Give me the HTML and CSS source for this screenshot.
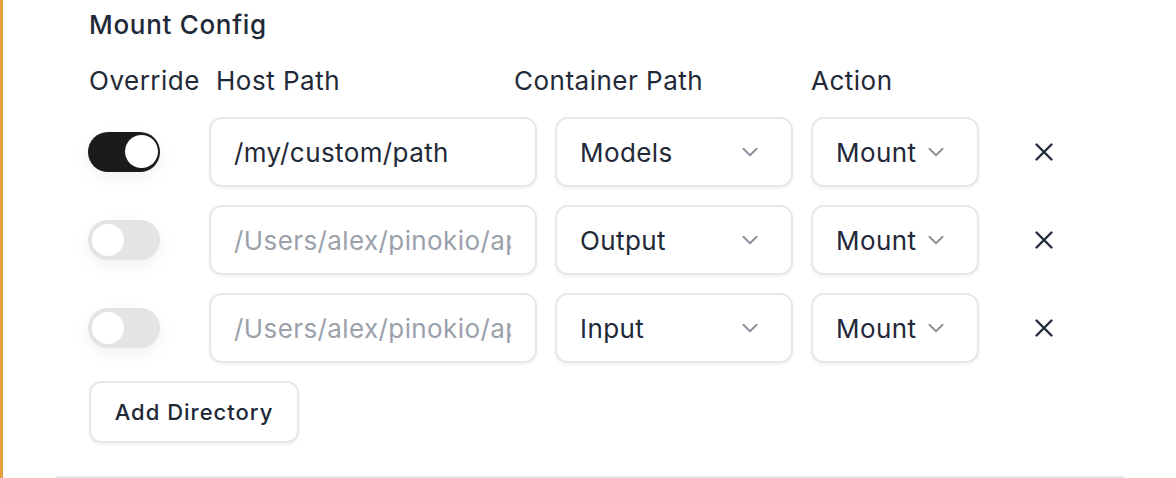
FILE: index.html
```html
<!DOCTYPE html>
<html>
<head>
<meta charset="utf-8">
<link rel="stylesheet" href="styles.css">
</head>
<body>
<div class="panel">
  <div class="content">
    <h2 class="title">Mount Config</h2>
    <div class="head">
      <span class="h-override">Override</span>
      <span class="h-host">Host Path</span>
      <span class="h-cont">Container Path</span>
      <span class="h-action">Action</span>
    </div>
    <div class="rows">
      <div class="row">
        <div class="toggle on"><span class="knob"></span></div>
        <div class="field"><span class="val">/my/custom/path</span></div>
        <div class="field select"><span class="val">Models</span><svg class="chev" viewBox="0 0 20 20"><path d="M4 7l6 6 6-6"/></svg></div>
        <div class="field select action"><span class="val">Mount</span><svg class="chev" viewBox="0 0 20 20"><path d="M4 7l6 6 6-6"/></svg></div>
        <button class="remove"><svg viewBox="0 0 24 24"><path d="M3 3l18 18M21 3L3 21"/></svg></button>
      </div>
      <div class="row">
        <div class="toggle"><span class="knob"></span></div>
        <div class="field"><span class="val ph">/Users/alex/pinokio/ap</span></div>
        <div class="field select"><span class="val">Output</span><svg class="chev" viewBox="0 0 20 20"><path d="M4 7l6 6 6-6"/></svg></div>
        <div class="field select action"><span class="val">Mount</span><svg class="chev" viewBox="0 0 20 20"><path d="M4 7l6 6 6-6"/></svg></div>
        <button class="remove"><svg viewBox="0 0 24 24"><path d="M3 3l18 18M21 3L3 21"/></svg></button>
      </div>
      <div class="row">
        <div class="toggle"><span class="knob"></span></div>
        <div class="field"><span class="val ph">/Users/alex/pinokio/ap</span></div>
        <div class="field select"><span class="val">Input</span><svg class="chev" viewBox="0 0 20 20"><path d="M4 7l6 6 6-6"/></svg></div>
        <div class="field select action"><span class="val">Mount</span><svg class="chev" viewBox="0 0 20 20"><path d="M4 7l6 6 6-6"/></svg></div>
        <button class="remove"><svg viewBox="0 0 24 24"><path d="M3 3l18 18M21 3L3 21"/></svg></button>
      </div>
    </div>
    <button class="add">Add Directory</button>
  </div>
  <div class="divider"></div>
</div>
</body>
</html>
```
FILE: styles.css
```css
* { box-sizing: border-box; }
html, body { margin: 0; padding: 0; background: #fff; }
body {
  font-family: Inter, "Noto Sans", sans-serif;
  color: #1f2937;
  width: 1176px;
  height: 478px;
  overflow: hidden;
}
.panel {
  border-left: 3px solid #e3a03c;
  height: 478px;
  padding-left: 53px;
  display: flex;
  flex-direction: column;
}
.content {
  padding-left: 32px;
  padding-top: 9px;
  display: flex;
  flex-direction: column;
}
.title {
  margin: 0;
  font-size: 26px;
  line-height: 32px;
  font-weight: 500;
  letter-spacing: 0.7px;
  margin-left: 1px;
}
.head {
  display: flex;
  font-size: 26px;
  line-height: 32px;
  letter-spacing: 0.5px;
  margin-top: 24px;
  margin-left: 1px;
}
.h-override { width: 127px; }
.h-host { width: 298px; }
.h-cont { width: 297px; }
.rows {
  margin-top: 20px;
  display: flex;
  flex-direction: column;
  gap: 18px;
}
.row {
  display: grid;
  grid-template-columns: 103px 328px 238px 168px 94px;
  column-gap: 18px;
  align-items: center;
  height: 70px;
}
.toggle {
  width: 72px;
  height: 40px;
  border-radius: 20px;
  background: #e4e4e4;
  position: relative;
  box-shadow: 0 6px 18px rgba(0,0,0,0.06);
}
.toggle .knob {
  position: absolute;
  top: 4px;
  left: 4px;
  width: 32px;
  height: 32px;
  border-radius: 50%;
  background: #fff;
}
.toggle.on { background: #1b1b1b; }
.toggle.on .knob { left: 37px; top: 3px; width: 33px; height: 33px; }
.field {
  height: 70px;
  border: 2px solid #e6e7ea;
  border-radius: 13px;
  background: #fff;
  box-shadow: 0 2px 3px rgba(0,0,0,0.05);
  display: flex;
  align-items: center;
  padding: 0 24px 0 23px;
  font-size: 26px;
  letter-spacing: 0.4px;
  overflow: hidden;
  white-space: nowrap;
}
.field .val { overflow: hidden; }
.field .ph { color: #9aa1ab; }
.select { justify-content: space-between; padding-right: 30px; }
.select.action { justify-content: flex-start; padding-right: 0; }
.select.action .chev { margin-left: 9px; }
.chev {
  width: 22px;
  height: 22px;
  fill: none;
  stroke: #8d949e;
  stroke-width: 1.8;
  stroke-linecap: round;
  stroke-linejoin: round;
  flex: none;
}
.remove {
  border: 0;
  background: none;
  padding: 0;
  height: 70px;
  display: flex;
  align-items: center;
  justify-content: center;
  cursor: pointer;
}
.remove svg {
  width: 20px;
  height: 20px;
  fill: none;
  stroke: #1f2937;
  stroke-width: 2.8;
  stroke-linecap: round;
}
.add {
  margin-top: 18px;
  align-self: flex-start;
  width: 210px;
  height: 62px;
  border: 2px solid #e6e7ea;
  border-radius: 12px;
  background: #fff;
  box-shadow: 0 2px 3px rgba(0,0,0,0.05);
  font-family: Inter, "Noto Sans", sans-serif;
  font-size: 22px;
  font-weight: 500;
  letter-spacing: 1px;
  color: #1f2937;
  margin-left: 1px;
}
.divider {
  margin-top: auto;
  width: 1068px;
  height: 2px;
  background: #e5e7eb;
}
```
